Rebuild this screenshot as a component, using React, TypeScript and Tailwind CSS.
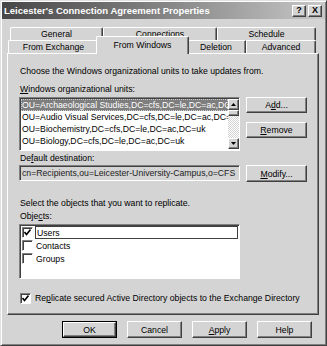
import React from "react";

const raised =
  "border border-t-white border-l-white border-r-[#404040] border-b-[#404040] shadow-[inset_-1px_-1px_0_#808080]";
const sunken =
  "border border-t-[#808080] border-l-[#808080] border-r-white border-b-white shadow-[inset_1px_1px_0_#404040]";

const Btn: React.FC<{ children: React.ReactNode; className?: string }> = ({ children, className = "" }) => (
  <div className={`${raised} bg-[#d4d4d4] flex items-center justify-center text-black ${className}`}>{children}</div>
);

const Check: React.FC<{ checked?: boolean; className?: string }> = ({ checked, className = "" }) => (
  <div className={`${sunken} w-[11px] h-[11px] bg-white flex items-center justify-center shrink-0 ${className}`}>
    {checked && (
      <svg width="7" height="7" viewBox="0 0 7 7">
        <path d="M0.5 3 L2.5 5.5 L6.5 0.5" stroke="#000" strokeWidth="1.6" fill="none" />
      </svg>
    )}
  </div>
);

const Arrow: React.FC<{ up?: boolean }> = ({ up }) => (
  <div className={`${raised} bg-[#d4d4d4] w-[11px] h-[11px] flex items-center justify-center`}>
    <svg width="5" height="3" viewBox="0 0 5 3">
      <path d={up ? "M2.5 0 L5 3 L0 3 Z" : "M0 0 L5 0 L2.5 3 Z"} fill="#000" />
    </svg>
  </div>
);

const App: React.FC = () => {
  const units = [
    "OU=Archaeological Studies,DC=cfs,DC=le,DC=ac,DC=uk",
    "OU=Audio Visual Services,DC=cfs,DC=le,DC=ac,DC=uk",
    "OU=Biochemistry,DC=cfs,DC=le,DC=ac,DC=uk",
    "OU=Biology,DC=cfs,DC=le,DC=ac,DC=uk",
  ];
  const objects = [
    { name: "Users", checked: true },
    { name: "Contacts", checked: false },
    { name: "Groups", checked: false },
  ];
  const row1 = [
    { label: "General", w: "w-[93px]" },
    { label: "Connections", w: "w-[114px]" },
    { label: "Schedule", w: "w-[99px]" },
  ];

  return (
    <div className="w-[327px] h-[346px] bg-[#d4d4d4] border border-t-[#e0e0e0] border-l-[#e0e0e0] border-r-[#404040] border-b-[#404040] shadow-[inset_1px_1px_0_#fff,inset_-1px_-1px_0_#808080] font-['Liberation_Sans',Arial,sans-serif] text-[8.7px] leading-[12px] text-black overflow-hidden">
      {/* title bar */}
      <div className="h-[17px] mx-px mt-px flex items-center bg-linear-to-r from-[#474747] to-[#c8c8c8] pl-[2px] pr-[3px]">
        <span className="flex-1 text-white font-bold text-[9.5px] tracking-[0px]">Leicester's Connection Agreement Properties</span>
        <div className={`${raised} bg-[#d4d4d4] w-[14px] h-[12px] flex items-center justify-center font-bold text-[9px] leading-none`}>?</div>
        <div className={`${raised} bg-[#d4d4d4] w-[14px] h-[12px] ml-[2px] flex items-center justify-center font-bold text-[9px] leading-none`}>X</div>
      </div>

      {/* tabs */}
      <div className="flex ml-[9px] mt-[8px] h-[13px]">
        {row1.map((t) => (
          <div
            key={t.label}
            className={`${t.w} h-[13px] border-t border-l border-r border-t-white border-l-white border-r-[#404040] rounded-t-[2px] shadow-[inset_-1px_0_0_#808080] text-center leading-[12px]`}
          >
            {t.label}
          </div>
        ))}
      </div>
      <div className="flex items-end ml-[7px] h-[13px]">
        <div className="w-[90px] h-[13px] border-t border-l border-t-white border-l-white rounded-tl-[2px] text-center leading-[12px]">
          From Exchange
        </div>
        <div className="relative z-10 -mx-[2px] -mb-px w-[93px] h-[18px] bg-[#d4d4d4] border-t border-l border-r border-t-white border-l-white border-r-[#404040] rounded-t-[2px] shadow-[inset_-1px_0_0_#808080] text-center leading-[12px] pt-[2px]">
          From Windows
        </div>
        <div className="w-[59px] h-[13px] border-t border-r border-t-white border-r-[#404040] shadow-[inset_-1px_0_0_#808080] text-center leading-[12px]">
          Deletion
        </div>
        <div className="w-[70px] h-[13px] border-t border-r border-t-white border-r-[#404040] rounded-tr-[2px] shadow-[inset_-1px_0_0_#808080] text-center leading-[12px] border-l border-l-white">
          Advanced
        </div>
      </div>

      {/* panel */}
      <div className={`${raised} ml-[6px] w-[312px] h-[262px] pl-[11px] pt-[11px] flex flex-col`}>
        <p className="ml-px h-[12px]">Choose the Windows organizational units to take updates from.</p>
        <p className="ml-px mt-[6px] h-[12px]">
          <u>W</u>indows organizational units:
        </p>
        <div className="flex mt-[2px]">
          <div className={`${sunken} w-[221px] h-[54px] bg-white flex pl-px pt-px pb-px`}>
            <div className="flex-1 flex flex-col overflow-hidden">
              {units.map((u, i) => (
                <div
                  key={u}
                  className={`h-[12px] whitespace-nowrap overflow-hidden pl-px ${
                    i === 0 ? "bg-[#7e7e7e] text-white outline outline-dotted outline-[#cfcfcf] -outline-offset-1" : ""
                  }`}
                >
                  {u}
                </div>
              ))}
            </div>
            <div className="w-[11px] flex flex-col">
              <Arrow up />
              <div className={`${raised} bg-[#d4d4d4] h-[6px]`} />
              <div className="flex-1 bg-[repeating-conic-gradient(#ffffff_0_25%,#d4d4d4_0_50%)] bg-[length:2px_2px]" />
              <Arrow />
            </div>
          </div>
          <div className="ml-[6px] flex flex-col">
            <Btn className="w-[61px] h-[16px]">
              <span>
                A<u>d</u>d...
              </span>
            </Btn>
            <Btn className="w-[61px] h-[16px] mt-[9px]">
              <span>
                <u>R</u>emove
              </span>
            </Btn>
          </div>
        </div>

        <p className="ml-px mt-px h-[12px]">
          De<u>f</u>ault destination:
        </p>
        <div className="flex mt-px">
          <div className={`${sunken} w-[221px] h-[16px] bg-[#d4d4d4] pl-[2px] flex items-center whitespace-nowrap text-[#222]`}>
            cn=Recipients,ou=Leicester-University-Campus,o=CFS
          </div>
          <Btn className="w-[61px] h-[17px] ml-[6px]">
            <span>
              <u>M</u>odify...
            </span>
          </Btn>
        </div>

        <p className="ml-px mt-[15px] h-[12px]">Select the objects that you want to replicate.</p>
        <p className="ml-px mt-px h-[12px]">
          Obje<u>c</u>ts:
        </p>
        <div className={`${sunken} w-[221px] h-[55px] bg-white mt-[2px] pt-px pl-px pr-px flex flex-col`}>
          {objects.map((o, i) => (
            <div key={o.name} className="h-[13px] flex items-center">
              <Check checked={o.checked} className="ml-px" />
              <div
                className={`flex-1 h-[13px] ml-[2px] pl-px flex items-center ${
                  i === 0 ? "border border-[#404040]" : ""
                }`}
              >
                {o.name}
              </div>
            </div>
          ))}
        </div>

        <div className="flex items-center mt-[13px] h-[12px]">
          <Check checked className="ml-px" />
          <span className="ml-[4px]">
            Re<u>p</u>licate secured Active Directory objects to the Exchange Directory
          </span>
        </div>
      </div>

      {/* dialog buttons */}
      <div className="flex ml-[61px] mt-[6px] gap-[10px]">
        <div className="border border-black">
          <Btn className="w-[53px] h-[15px]">OK</Btn>
        </div>
        <Btn className="w-[55px] h-[17px]">Cancel</Btn>
        <Btn className="w-[55px] h-[17px]">
          <span>
            <u>A</u>pply
          </span>
        </Btn>
        <Btn className="w-[55px] h-[17px]">Help</Btn>
      </div>
    </div>
  );
};

export default App;
